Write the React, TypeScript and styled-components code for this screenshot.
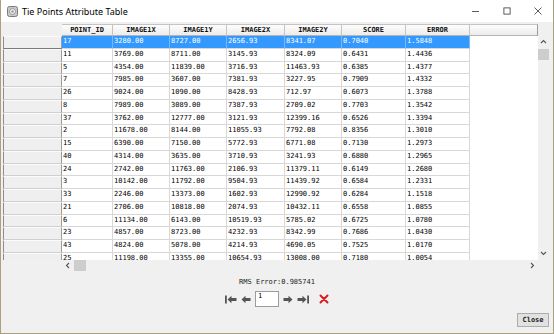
import React from "react";
import styled, { createGlobalStyle } from "styled-components";

const GlobalStyle = createGlobalStyle`
  html, body {
    margin: 0;
    padding: 0;
    background: #f0f0f0;
    overflow: hidden;
  }
`;

const MONO = `"DejaVu Sans Mono", "Liberation Mono", monospace`;

const COLUMNS = ["POINT_ID", "IMAGE1X", "IMAGE1Y", "IMAGE2X", "IMAGE2Y", "SCORE", "ERROR"];
const GRID = "59px 51px 57px 57px 58px 57px 64px 64px 1fr";

const ROWS: string[][] = [
    ["17", "3280.00", "8727.00", "2656.93", "8341.07", "0.7040", "1.5848"],
    ["11", "3769.00", "8711.00", "3145.93", "8324.09", "0.6431", "1.4436"],
    ["5", "4354.00", "11839.00", "3716.93", "11463.93", "0.6385", "1.4377"],
    ["7", "7985.00", "3607.00", "7381.93", "3227.95", "0.7909", "1.4332"],
    ["26", "9024.00", "1090.00", "8428.93", "712.97", "0.6073", "1.3788"],
    ["8", "7989.00", "3089.00", "7387.93", "2709.02", "0.7703", "1.3542"],
    ["37", "3762.00", "12777.00", "3121.93", "12399.16", "0.6526", "1.3394"],
    ["2", "11678.00", "8144.00", "11055.93", "7792.08", "0.8356", "1.3010"],
    ["15", "6390.00", "7150.00", "5772.93", "6771.08", "0.7130", "1.2973"],
    ["40", "4314.00", "3635.00", "3710.93", "3241.93", "0.6880", "1.2965"],
    ["24", "2742.00", "11763.00", "2106.93", "11379.11", "0.6149", "1.2680"],
    ["3", "10142.00", "11792.00", "9504.93", "11439.92", "0.6584", "1.2331"],
    ["33", "2246.00", "13373.00", "1602.93", "12990.92", "0.6284", "1.1518"],
    ["21", "2706.00", "10818.00", "2074.93", "10432.11", "0.6558", "1.0855"],
    ["6", "11134.00", "6143.00", "10519.93", "5785.02", "0.6725", "1.0780"],
    ["23", "4857.00", "8723.00", "4232.93", "8342.99", "0.7686", "1.0430"],
    ["43", "4824.00", "5078.00", "4214.93", "4690.05", "0.7525", "1.0170"],
    ["25", "11198.00", "13355.00", "10654.93", "13008.00", "0.7180", "1.0054"],
];

const Window = styled.div`
  width: 554px;
  height: 334px;
  box-sizing: border-box;
  border: 1px solid #aaa07b;
  border-top: none;
  background: #f0f0f0;
  display: flex;
  flex-direction: column;
`;

const TitleBar = styled.div`
  height: 22px;
  flex: none;
  background: #ffffff;
  display: flex;
  align-items: center;
  padding-left: 6px;
  gap: 4px;
`;

const TitleText = styled.span`
  font-family: "Noto Sans", "Open Sans", sans-serif;
  font-size: 9px;
  color: #000;
  flex: 1;
`;

const Controls = styled.div`
  display: flex;
  height: 100%;
`;

const ControlButton = styled.div`
  width: 31px;
  height: 100%;
  display: flex;
  align-items: center;
  justify-content: center;
`;

const Body = styled.div`
  margin-top: 2px;
  padding-left: 2px;
  height: 247px;
  flex: none;
  display: flex;
`;

const TableFrame = styled.div`
  width: 535px;
  display: flex;
  flex-direction: column;
`;

const GridRow = styled.div<{ $height: string }>`
  display: grid;
  grid-template-columns: ${GRID};
  height: ${p => p.$height};
  flex: none;
`;

const Corner = styled.div`
  background: #f0f0f0;
`;

const HeaderCell = styled.div<{ $filler?: boolean }>`
  box-sizing: border-box;
  background: linear-gradient(#fdfdfd, #ececec);
  border-top: 1px solid #c4c4c4;
  border-bottom: 1px solid #b4b4b4;
  border-right: 1px solid ${p => p.$filler ? "#9a9a9a" : "#c4c4c4"};
  font-family: ${MONO};
  font-size: 7px;
  font-weight: bold;
  line-height: 10px;
  text-align: center;
  color: #111;
  white-space: nowrap;
  overflow: hidden;
`;

const RowsViewport = styled.div`
  height: 224px;
  overflow: hidden;
  background: #ffffff;
`;

const RowHeader = styled.div<{ $selected?: boolean }>`
  box-sizing: border-box;
  background: #efefef;
  border-left: 1px solid #8c8c8c;
  border-right: 1px solid #9c9c9c;
  border-top: 1px solid #fbfbfb;
  border-bottom: 1px solid ${p => p.$selected ? "#7a7a7a" : "#cfcfcf"};
`;

const Cell = styled.div<{ $selected?: boolean }>`
  box-sizing: border-box;
  background: ${p => p.$selected ? "#3399ff" : "#ffffff"};
  color: ${p => p.$selected ? "#ffffff" : "#000000"};
  border-right: 1px solid ${p => p.$selected ? "#79b8f8" : "#d8d8d8"};
  border-bottom: 1px solid #d8d8d8;
  font-family: ${MONO};
  font-size: 7px;
  line-height: 11px;
  padding-left: 1px;
  white-space: nowrap;
  overflow: hidden;
`;

const Filler = styled.div`
  background: #ffffff;
`;

const HScrollRow = styled.div`
  display: flex;
  height: 11px;
  flex: none;
`;

const HScrollBar = styled.div`
  margin-left: 59px;
  flex: 1;
  display: flex;
  align-items: center;
  background: #f0f0f0;
`;

const ArrowBox = styled.div<{ $w: number; $h: number }>`
  width: ${p => p.$w}px;
  height: ${p => p.$h}px;
  flex: none;
  display: flex;
  align-items: center;
  justify-content: center;
`;

const Thumb = styled.div<{ $w: number; $h: number }>`
  width: ${p => p.$w}px;
  height: ${p => p.$h}px;
  flex: none;
  background: #cdcdcd;
`;

const Track = styled.div`
  flex: 1;
`;

const VScrollBar = styled.div`
  margin-top: 12px;
  width: 11px;
  height: 224px;
  display: flex;
  flex-direction: column;
  align-items: center;
  background: #f0f0f0;
`;

const Footer = styled.div`
  flex: 1;
  display: flex;
  flex-direction: column;
  align-items: center;
  padding-top: 7px;
`;

const RmsLabel = styled.div`
  font-family: ${MONO};
  font-size: 7px;
  line-height: 9px;
  height: 9px;
  color: #222;
  white-space: nowrap;
`;

const NavRow = styled.div`
  margin-top: 4px;
  height: 16px;
  display: flex;
  align-items: center;
  gap: 4px;
`;

const NavIcon = styled.div<{ $gapLeft?: number }>`
  display: flex;
  align-items: center;
  margin-left: ${p => p.$gapLeft ?? 0}px;
`;

const PageInput = styled.div`
  width: 24px;
  height: 16px;
  box-sizing: border-box;
  border: 1px solid #9c9c9c;
  background: #ffffff;
  font-family: ${MONO};
  font-size: 7px;
  line-height: 9px;
  padding-left: 2px;
  color: #000;
`;

const CloseRow = styled.div`
  align-self: stretch;
  display: flex;
  justify-content: flex-end;
  margin-top: 6px;
  padding-right: 4px;
`;

const CloseButton = styled.div`
  width: 32px;
  height: 14px;
  box-sizing: border-box;
  background: #e1e1e1;
  border: 1px solid #adadad;
  font-family: ${MONO};
  font-size: 7px;
  font-weight: bold;
  line-height: 12px;
  text-align: center;
  color: #222;
`;

const Chevron = ({ dir }: { dir: "up" | "down" | "left" | "right" }) => {
    const d = {
        up: "M1 4 L3.5 1.5 L6 4",
        down: "M1 2 L3.5 4.5 L6 2",
        left: "M4 1 L1.5 3.5 L4 6",
        right: "M2 1 L4.5 3.5 L2 6",
    }[dir];
    return (
        <svg width="7" height="7" viewBox="0 0 7 7">
            <path d={d} fill="none" stroke="#555" strokeWidth="1.1" />
        </svg>
    );
};

const AppIcon = () => (
    <svg width="11" height="11" viewBox="0 0 11 11">
        <rect x="0.5" y="0.5" width="10" height="10" rx="2" fill="#c9c9c9" stroke="#7b7b7b" />
        <circle cx="5.5" cy="5.5" r="3" fill="#eeeeee" stroke="#8a8a8a" strokeWidth="0.8" />
        <circle cx="5.5" cy="5.5" r="1.2" fill="#9a9a9a" />
    </svg>
);

const ArrowGlyph = ({ dir, bar }: { dir: "left" | "right"; bar?: boolean }) => {
    const left = "M0.5 4.5 L4.5 0.8 L4.5 3 L9.5 3 L9.5 6 L4.5 6 L4.5 8.2 Z";
    return (
        <svg width={bar ? 12 : 10} height="9" viewBox={bar ? "0 0 12 9" : "0 0 10 9"}>
            <g transform={dir === "right" ? `translate(${bar ? 12 : 10} 0) scale(-1 1)` : undefined}>
                {bar && <rect x="0" y="0.5" width="1.8" height="8" fill="#555" />}
                <g transform={bar ? "translate(2 0)" : undefined}>
                    <path d={left} fill="#555" />
                </g>
            </g>
        </svg>
    );
};

const RedCross = () => (
    <svg width="10" height="10" viewBox="0 0 10 10">
        <path d="M1.5 1.5 L8.5 8.5 M8.5 1.5 L1.5 8.5" stroke="#e01818" strokeWidth="2" strokeLinecap="round" />
    </svg>
);

const App = () => {
    return (
        <>
            <GlobalStyle />
            <Window>
                <TitleBar>
                    <AppIcon />
                    <TitleText>Tie Points Attribute Table</TitleText>
                    <Controls>
                        <ControlButton>
                            <svg width="8" height="8" viewBox="0 0 8 8"><path d="M0 4.5 H7" stroke="#333" strokeWidth="0.8" /></svg>
                        </ControlButton>
                        <ControlButton>
                            <svg width="8" height="8" viewBox="0 0 8 8"><rect x="0.9" y="0.9" width="6.2" height="6.2" fill="none" stroke="#333" strokeWidth="0.8" /></svg>
                        </ControlButton>
                        <ControlButton>
                            <svg width="8" height="8" viewBox="0 0 8 8"><path d="M0.5 0.5 L7.5 7.5 M7.5 0.5 L0.5 7.5" stroke="#333" strokeWidth="0.8" /></svg>
                        </ControlButton>
                    </Controls>
                </TitleBar>
                <Body>
                    <TableFrame>
                        <GridRow $height="12px">
                            <Corner />
                            {COLUMNS.map(c => <HeaderCell key={c}>{c}</HeaderCell>)}
                            <HeaderCell $filler />
                        </GridRow>
                        <RowsViewport>
                            {ROWS.map((row, i) => (
                                <GridRow $height="12.75px" key={i}>
                                    <RowHeader $selected={i === 0} />
                                    {row.map((v, j) => <Cell key={j} $selected={i === 0}>{v}</Cell>)}
                                    <Filler />
                                </GridRow>
                            ))}
                        </RowsViewport>
                        <HScrollRow>
                            <HScrollBar>
                                <ArrowBox $w={12} $h={11}><Chevron dir="left" /></ArrowBox>
                                <Thumb $w={12} $h={11} />
                                <Track />
                                <ArrowBox $w={12} $h={11}><Chevron dir="right" /></ArrowBox>
                            </HScrollBar>
                        </HScrollRow>
                    </TableFrame>
                    <VScrollBar>
                        <ArrowBox $w={11} $h={13}><Chevron dir="up" /></ArrowBox>
                        <Thumb $w={11} $h={11} />
                        <Track />
                        <ArrowBox $w={11} $h={13}><Chevron dir="down" /></ArrowBox>
                    </VScrollBar>
                </Body>
                <Footer>
                    <RmsLabel>RMS Error:0.985741</RmsLabel>
                    <NavRow>
                        <NavIcon><ArrowGlyph dir="left" bar /></NavIcon>
                        <NavIcon><ArrowGlyph dir="left" /></NavIcon>
                        <PageInput>1</PageInput>
                        <NavIcon><ArrowGlyph dir="right" /></NavIcon>
                        <NavIcon><ArrowGlyph dir="right" bar /></NavIcon>
                        <NavIcon $gapLeft={6}><RedCross /></NavIcon>
                    </NavRow>
                    <CloseRow>
                        <CloseButton>Close</CloseButton>
                    </CloseRow>
                </Footer>
            </Window>
        </>
    );
};

export default App;
